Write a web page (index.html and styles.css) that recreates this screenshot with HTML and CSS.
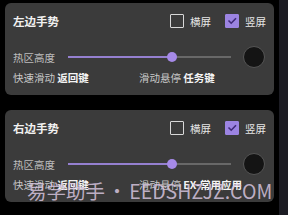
FILE: index.html
```html
<!DOCTYPE html>
<html>
<head>
<meta charset="utf-8">
<link rel="stylesheet" href="styles.css">
</head>
<body>
<div class="screen">
  <div class="main">
    <div class="card">
      <div class="head">
        <div class="title">左边手势</div>
        <div class="checks">
          <span class="box"></span><span class="clabel">横屏</span>
          <span class="box checked"><svg viewBox="0 0 14 14" width="14" height="14"><path d="M3.5 6.5 L6.2 9.2 L11 4.2" fill="none" stroke="#3f2a78" stroke-width="1.6"/></svg></span><span class="clabel">竖屏</span>
        </div>
      </div>
      <div class="srow">
        <span class="slabel">热区高度</span>
        <div class="track"><div class="fill" style="width:64%"></div><span class="thumb" style="left:64%"></span></div>
        <span class="dot"></span>
      </div>
      <div class="grow">
        <div><span class="k">快速滑动</span> <span class="v">返回键</span></div>
        <div><span class="k">滑动悬停</span> <span class="v">任务键</span></div>
      </div>
    </div>
    <div class="card">
      <div class="head">
        <div class="title">右边手势</div>
        <div class="checks">
          <span class="box"></span><span class="clabel">横屏</span>
          <span class="box checked"><svg viewBox="0 0 14 14" width="14" height="14"><path d="M3.5 6.5 L6.2 9.2 L11 4.2" fill="none" stroke="#3f2a78" stroke-width="1.6"/></svg></span><span class="clabel">竖屏</span>
        </div>
      </div>
      <div class="srow">
        <span class="slabel">热区高度</span>
        <div class="track"><div class="fill" style="width:64%"></div><span class="thumb" style="left:64%"></span></div>
        <span class="dot"></span>
      </div>
      <div class="grow">
        <div><span class="k">快速滑动</span> <span class="v">返回键</span></div>
        <div><span class="k">滑动悬停</span> <span class="v">EX-常用应用</span></div>
      </div>
    </div>
  </div>
  <div class="strip"></div>
  <div class="watermark">易学助手 • EEDSHZJZ.COM</div>
</div>
</body>
</html>
```
FILE: styles.css
```css
html, body {
  margin: 0;
  padding: 0;
  background: #000;
}
.screen {
  position: relative;
  width: 288px;
  height: 215px;
  display: flex;
  gap: 5px;
  padding: 3px 0 0 5px;
  box-sizing: border-box;
  font-family: "Noto Sans CJK SC", "Noto Sans", sans-serif;
  overflow: hidden;
}
.main {
  width: 269px;
  display: flex;
  flex-direction: column;
  gap: 15px;
}
.strip {
  width: 9px;
  margin-top: -3px;
  height: 215px;
  background: #1c1c23;
}
.card {
  height: 92px;
  background: #3b3b3b;
  border-radius: 6px;
  padding: 6px 9px 0 8px;
  box-sizing: border-box;
}
.head {
  height: 24px;
  display: flex;
  align-items: center;
  justify-content: space-between;
}
.title {
  color: #f0f0f0;
  font-size: 11.5px;
  font-weight: 700;
}
.checks {
  display: flex;
  align-items: center;
  margin-right: -1px;
}
.box {
  width: 14px;
  height: 14px;
  box-sizing: border-box;
  border: 1.5px solid #d8d8d8;
  border-radius: 1px;
  display: inline-block;
}
.box.checked {
  background: #9c84e2;
  border-color: #9c84e2;
  position: relative;
}
.box.checked svg {
  position: absolute;
  left: -1.5px;
  top: -1.5px;
}
.clabel {
  color: #e6e6e6;
  font-size: 10.5px;
  margin-left: 6px;
  margin-right: 14px;
}
.clabel:last-child {
  margin-right: 0;
}
.srow {
  margin-top: 13px;
  height: 22px;
  display: flex;
  align-items: center;
}
.slabel {
  color: #bdbdbd;
  font-size: 10.5px;
  width: 55px;
}
.track {
  position: relative;
  width: 163px;
  height: 2px;
  background: #686868;
}
.fill {
  height: 2px;
  background: #9580d0;
}
.thumb {
  position: absolute;
  top: -4px;
  width: 10px;
  height: 10px;
  margin-left: -5px;
  border-radius: 50%;
  background: #a68ae8;
}
.dot {
  width: 22px;
  height: 22px;
  margin-left: 12px;
  border-radius: 50%;
  background: #141414;
  box-sizing: border-box;
  border: 1px solid #555;
}
.grow {
  margin-top: 3px;
  height: 14px;
  display: grid;
  grid-template-columns: 126px 1fr;
  align-items: center;
  font-size: 10.5px;
  line-height: 14px;
}
.k {
  color: #c8c8c8;
}
.v {
  color: #f4f4f4;
  font-weight: 700;
}
.watermark {
  position: absolute;
  left: 27px;
  top: 179px;
  font-size: 19.5px;
  font-weight: 400;
  color: rgba(214, 196, 222, 0.85);
  white-space: nowrap;
  line-height: 24px;
  word-spacing: -2px;
}
```
